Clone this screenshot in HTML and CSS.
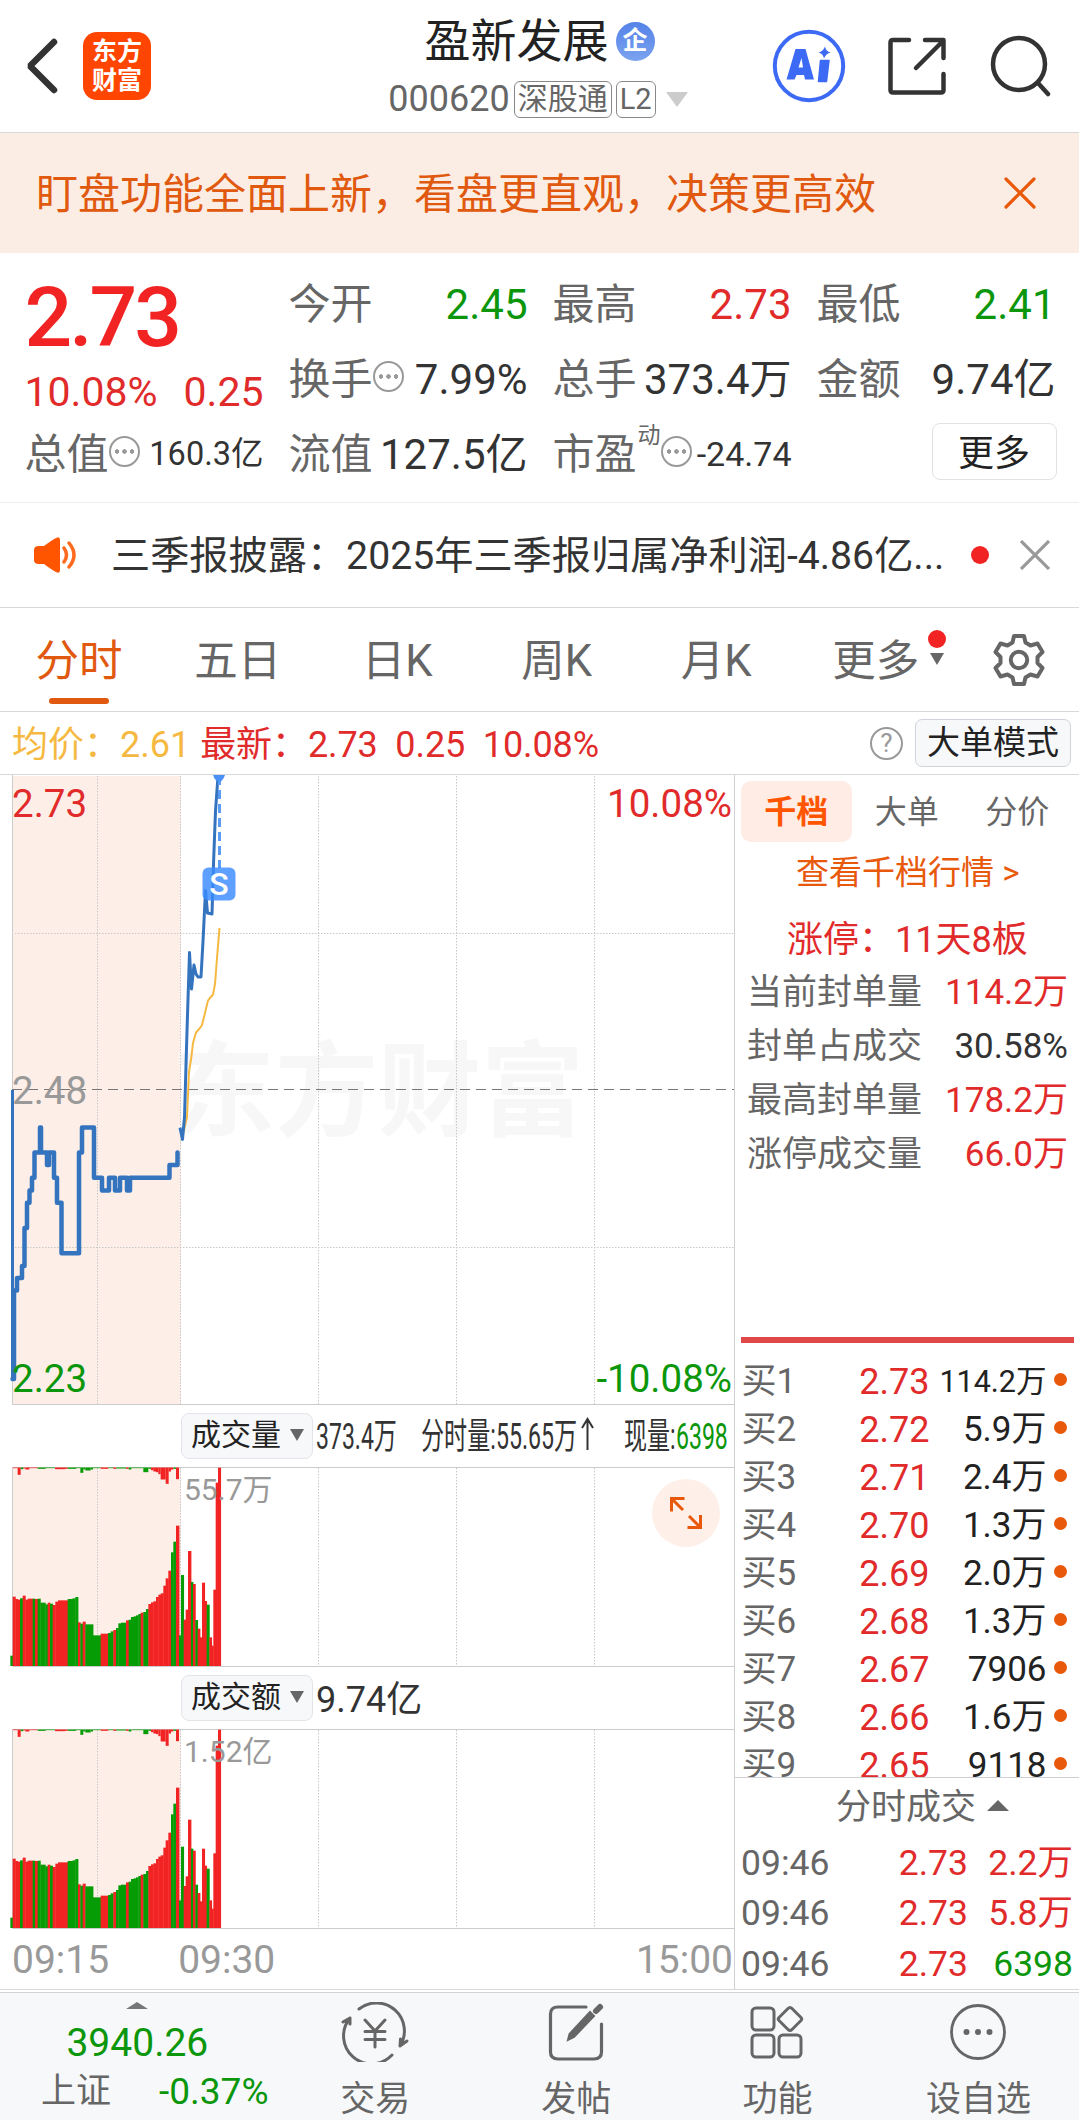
FILE: index.html
```html
<!DOCTYPE html>
<html lang="zh-CN">
<head>
    <meta charset="UTF-8">
    <meta name="viewport" content="width=device-width, initial-scale=1.0">
    <title>盈新发展 000620</title>
    <link rel="stylesheet" href="styles.css">
</head>
<body>
    <!-- 顶部导航 -->
    <header class="header">
        <div class="header-left">
            <svg class="back" width="34" height="56" viewBox="0 0 34 56" fill="none"><path d="M29 4 5 28l24 24" stroke="#333" stroke-width="6.5" stroke-linecap="round" stroke-linejoin="bevel"/></svg>
            <div class="logo"><span>东方</span><span>财富</span></div>
        </div>
        <div class="header-title">
            <div class="name">盈新发展<span class="corp">企</span></div>
            <div class="code">000620<span class="tag">深股通</span><span class="tag tag-l2">L2</span><i class="arrow-down"></i></div>
        </div>
        <div class="header-icons">
            <svg width="74" height="74" viewBox="0 0 74 74" fill="none">
                <circle cx="37" cy="37" r="34.2" stroke="#3d6af5" stroke-width="4"/>
                <path d="M23.500 20H33.500L42 50.500H33L32 46H24.500L22.500 50.500H14.500ZM29.500 29 26.500 38.500H31Z" fill="#3d6af5" fill-rule="evenodd"/>
                <path d="M48.500 31.500H57L54.500 52.500H46.500Z" stroke="#3d6af5" stroke-width="1.500" fill="#3d6af5" stroke-linejoin="round"/>
                <path d="M53 17.500Q54 22.500 58.500 23.500 54 24.500 52 29.500 51 24.500 46.500 23.500 51 22.500 53 17.500Z" fill="#3d6af5"/>
            </svg>
            <svg width="60" height="60" viewBox="0 0 60 60" fill="none" stroke="#333" stroke-width="4.500" stroke-linecap="round" stroke-linejoin="round"><path d="M22 4H6Q3.500 4 3.500 6.500V54Q3.500 56.500 6 56.500H54Q56.500 56.500 56.500 54V38M38 4H56.500V22M56 5 29 32"/></svg>
            <svg class="search" width="62" height="62" viewBox="0 0 62 62" fill="none" stroke="#333" stroke-width="4.500" stroke-linecap="round"><circle cx="29" cy="29" r="26"/><path d="M48 48 58 59"/></svg>
        </div>
    </header>

    <!-- 提示条 -->
    <div class="banner">
        <span>盯盘功能全面上新，看盘更直观，决策更高效</span>
        <svg width="34" height="34" viewBox="0 0 34 34" stroke="#e8590c" stroke-width="3.200" stroke-linecap="round"><path d="M3 3 31 31M31 3 3 31"/></svg>
    </div>

    <!-- 行情数据 -->
    <section class="quote">
        <div class="price-block">
            <div class="price">2.73</div>
            <div class="change"><span>10.08%</span><span>0.25</span></div>
        </div>
        <div class="cell"><label>今开</label><b class="green">2.45</b></div>
        <div class="cell"><label>最高</label><b class="red">2.73</b></div>
        <div class="cell"><label>最低</label><b class="green">2.41</b></div>
        <div class="cell"><label>换手<i class="dots"></i></label><b>7.99%</b></div>
        <div class="cell"><label>总手</label><b>373.4万</b></div>
        <div class="cell"><label>金额</label><b>9.74亿</b></div>
        <div class="cell"><label>总值<i class="dots"></i></label><b class="smaller">160.3亿</b></div>
        <div class="cell"><label>流值</label><b>127.5亿</b></div>
        <div class="cell"><label>市盈<sup>动</sup><i class="dots"></i></label><b class="small">-24.74</b></div>
        <div class="cell cell-more"><button class="more-btn">更多</button></div>
    </section>

    <!-- 公告 -->
    <div class="news">
        <svg width="46" height="38" viewBox="0 0 46 38" fill="none"><path d="M2 14Q2 10 7 10H12Q20 4 24 2 28 0 28 4V34Q28 38 24 36 20 34 12 28H7Q2 28 2 24Z" fill="#ff5500"/><path d="M32 12Q37 19 32 26M37 7Q47 19 37 31" stroke="#ff6a1f" stroke-width="3.500" stroke-linecap="round"/></svg>
        <span class="news-text">三季报披露：2025年三季报归属净利润-4.86亿...</span>
        <i class="news-dot"></i>
        <svg width="30" height="30" viewBox="0 0 30 30" stroke="#999" stroke-width="3.200"><path d="M1 1 29 29M29 1 1 29"/></svg>
    </div>

    <!-- 周期切换 -->
    <nav class="tabs">
        <span class="tab active">分时</span>
        <span class="tab">五日</span>
        <span class="tab">日K</span>
        <span class="tab">周K</span>
        <span class="tab">月K</span>
        <span class="tab tab-more">更多<i></i></span>
        <svg class="gear" width="54" height="54" viewBox="0 0 54 54" fill="none" stroke="#666" stroke-width="4" stroke-linejoin="round"><path d="M22 3H32L33.500 9.500 38.500 12.500 45.500 10.500 50.500 19 45.500 24V30L50.500 35 45.500 43.500 38.500 41.500 33.500 44.500 32 51H22L20.500 44.500 15.500 41.500 8.500 43.500 3.500 35 8.500 30V24L3.500 19 8.500 10.500 15.500 12.500 20.500 9.500Z"/><circle cx="27" cy="27" r="8.200"/></svg>
    </nav>

    <div class="info">
        <span class="avg">均价：2.61</span>
        <span class="latest">最新：2.73&nbsp; 0.25&nbsp; 10.08%</span>
        <span class="help">?</span>
        <button class="mode-btn">大单模式</button>
    </div>

    <main class="main">
        <div class="charts">
            <!-- 分时图 -->
            <svg class="price-chart" width="734" height="630" viewBox="0 0 734 630">
                <rect x="13" y="1" width="168" height="629" fill="#fdeee8"/>
                <text class="watermark" x="172" y="353" textLength="412">东方财富</text>
                <path class="grid" d="M97.500 1V629M180.500 1V629M318.500 1V629M456.500 1V629M594.500 1V629M15 158.500H734M15 472.500H734"/>
                <path d="M12.500 0V629.500H734" stroke="#ccc" fill="none"/>
                <path d="M12 314.500H734" stroke="#777" stroke-dasharray="10 6"/>
                <text class="lv" x="12" y="329" fill="#999">2.48</text>
                <path class="line" stroke-width="3" d="M12.500 315V604"/>
                <path class="line" stroke-width="4.500" stroke-linecap="round" d="M12.500 604H14V515.400H17V503H22V491H24.500V453H27V427.700H29.500V415.400H32V402.800H34.500V377.400H40V352.600H41V377.400H47V390H49V377.400H54V402.800H57V427.700H61.500V478.300H79V377.400H82V352.600H94V402.800H102V415.400H109V402.800H115V415.400H120V402.800H127V415.400H130V402.800H169.500V390H177.500V377.400"/>
                <path d="M182 364 187 342 189 297 191.500 281 193 268 196 257.500 200 253 202 250 204 242 208 225.600 210 223 213 219.500 215 209 217 183 219.500 153" fill="none" stroke="#f5b942" stroke-width="2"/>
                <path class="line" stroke-width="3" d="M180 352.600 182.500 364.400 184.500 342 187 256 189.500 177.500 191.500 214 194 190 196 199 198 202H201L203 166.400 205.500 115.400 207.500 138 212 139 213.500 89 215.500 36 218 1"/>
                <path d="M219.500 1V93" stroke="#5b9cf6" stroke-width="3" stroke-dasharray="9 5"/>
                <path d="M213 0H225Q223 6 219 7 215 6 213 0Z" fill="#4a90f5"/>
                <rect x="202.500" y="92.500" width="33" height="33" rx="6" fill="#3b8bff" fill-opacity=".82"/>
                <text x="219" y="120" text-anchor="middle" font-size="32" font-weight="500" fill="#fff">S</text>
                <text class="lv" x="12" y="42" fill="#e12b2b">2.73</text>
                <text class="lv" x="12" y="617" fill="#0b960b">2.23</text>
                <text class="lv" x="732" y="42" text-anchor="end" fill="#e12b2b">10.08%</text>
                <text class="lv" x="732" y="617" text-anchor="end" fill="#0b960b">-10.08%</text>
            </svg>

            <!-- 成交量 -->
            <div class="ind-head">
                <button class="ind-btn">成交量<i></i></button>
                <svg width="421" height="46" viewBox="0 0 421 46" fill="#333">
                    <text transform="translate(3 36) scale(.64 1)">373.4万</text>
                    <text transform="translate(108 36) scale(.642 1)">分时量:55.65万</text>
                    <path d="M274.500 37V6M269 15 274.500 6 280 15" stroke="#333" stroke-width="2" fill="none"/>
                    <text transform="translate(311 36) scale(.64 1)">现量:</text>
                    <text transform="translate(363 36) scale(.64 1)" fill="#0b960b">6398</text>
                </svg>
            </div>
            <div class="bar-chart">
                <svg id="volChart" width="734" height="200" viewBox="0 0 734 200"></svg>
                <span class="bar-max">55.7万</span>
                <span class="expand">
                    <svg width="34" height="34" viewBox="0 0 34 34" fill="none" stroke="#e8590c" stroke-width="3"><path d="M15.500 2.500H2.500V15.500M3 3 14 14M31.500 19V31.500H18.500M31 31 20 20"/></svg>
                </span>
            </div>

            <!-- 成交额 -->
            <div class="ind-head">
                <button class="ind-btn">成交额<i></i></button>
                <span class="ind-val">9.74亿</span>
            </div>
            <div class="bar-chart">
                <svg id="amtChart" width="734" height="200" viewBox="0 0 734 200"></svg>
                <span class="bar-max">1.52亿</span>
            </div>
            <div class="axis"><span>09:15</span><span class="axis-open">09:30</span><span>15:00</span></div>
        </div>

        <!-- 盘口 -->
        <aside class="side">
            <div class="side-tabs"><span class="on">千档</span><span>大单</span><span>分价</span></div>
            <div class="side-link">查看千档行情 &gt;</div>
            <div class="limit-title">涨停：11天8板</div>
            <div class="limit-row"><span>当前封单量</span><b class="red">114.2万</b></div>
            <div class="limit-row"><span>封单占成交</span><b>30.58%</b></div>
            <div class="limit-row"><span>最高封单量</span><b class="red">178.2万</b></div>
            <div class="limit-row"><span>涨停成交量</span><b class="red">66.0万</b></div>
            <div class="split"></div>
            <div class="book">
                <div class="book-row"><span>买1</span><em>2.73</em><b class="long">114.2万</b><i></i></div>
                <div class="book-row"><span>买2</span><em>2.72</em><b>5.9万</b><i></i></div>
                <div class="book-row"><span>买3</span><em>2.71</em><b>2.4万</b><i></i></div>
                <div class="book-row"><span>买4</span><em>2.70</em><b>1.3万</b><i></i></div>
                <div class="book-row"><span>买5</span><em>2.69</em><b>2.0万</b><i></i></div>
                <div class="book-row"><span>买6</span><em>2.68</em><b>1.3万</b><i></i></div>
                <div class="book-row"><span>买7</span><em>2.67</em><b>7906</b><i></i></div>
                <div class="book-row"><span>买8</span><em>2.66</em><b>1.6万</b><i></i></div>
                <div class="book-row"><span>买9</span><em>2.65</em><b>9118</b><i></i></div>
            </div>
            <div class="deal-title">分时成交<i></i></div>
            <div class="deal-row"><span>09:46</span><em>2.73</em><b class="red">2.2万</b></div>
            <div class="deal-row"><span>09:46</span><em>2.73</em><b class="red">5.8万</b></div>
            <div class="deal-row"><span>09:46</span><em>2.73</em><b class="green">6398</b></div>
        </aside>
    </main>

    <!-- 底部栏 -->
    <footer class="footer">
        <div class="index">
            <i class="arrow-up"></i>
            <div class="index-val">3940.26</div>
            <div class="index-sub"><span>上证</span><span class="green">-0.37%</span></div>
        </div>
        <div class="foot-item">
            <svg width="68" height="60" viewBox="0 0 68 60" fill="none" stroke="#666" stroke-width="3" stroke-linecap="round" stroke-linejoin="round"><path d="M18 7A28 28 0 0 1 59 44L66 39M59 44 59.500 37M51 53A28 28 0 0 1 9 16L2 20M9 16 9 22"/><path d="M24 18 34 29 44 18M34 29V45M24 29.500H44M24 37.500H44"/></svg>
            <span>交易</span>
        </div>
        <div class="foot-item">
            <svg width="60" height="60" viewBox="0 0 60 60" fill="none" stroke="#666" stroke-width="3.200" stroke-linecap="round"><path d="M40 5H12Q4.500 5 4.500 12V50Q4.500 57 12 57H48Q55.500 57 55.500 50V22"/><path d="M22 38 23.500 32 44 10 48 14 28 35Z" fill="#666" stroke-width="2"/><path d="M50 9 54 5" stroke-width="6"/></svg>
            <span>发帖</span>
        </div>
        <div class="foot-item">
            <svg width="60" height="60" viewBox="0 0 60 60" fill="none" stroke="#666" stroke-width="3" stroke-linejoin="round"><rect x="5" y="6" width="22" height="22" rx="4"/><rect x="5" y="33" width="22" height="22" rx="4"/><rect x="32" y="33" width="22" height="22" rx="4"/><path d="M41 6.500Q43 4.500 45 6.500L54 15.500Q55.500 17 54 18.500L45 27.500Q43 29.500 41 27.500L32 18.500Q30.500 17 32 15.500Z"/></svg>
            <span>功能</span>
        </div>
        <div class="foot-item">
            <svg width="60" height="60" viewBox="0 0 60 60" fill="#666"><circle cx="30" cy="30" r="26.500" fill="none" stroke="#666" stroke-width="2.800"/><circle cx="18.500" cy="30" r="3"/><circle cx="30" cy="30" r="3"/><circle cx="41.500" cy="30" r="3"/></svg>
            <span>设自选</span>
        </div>
    </footer>

    <script>
        // 集合竞价柱：[右边界, 高度, 颜色]，单位为 1/3 像素
        const auction = [
            [38,31,'g'],[46,208,'r'],[53,201,'r'],[60,199,'r'],[68,203,'g'],[76,211,'r'],[83,199,'r'],[98,202,'r'],
            [105,202,'g'],[113,201,'r'],[121,202,'g'],[136,190,'g'],[143,185,'g'],[150,190,'r'],[158,187,'g'],
            [166,183,'r'],[174,193,'r'],[203,197,'r'],[218,201,'g'],[226,203,'g'],[234,207,'g'],[241,131,'r'],
            [248,127,'g'],[256,133,'r'],[279,125,'g'],[302,92,'g'],[324,97,'r'],[332,99,'g'],[340,104,'g'],
            [348,108,'r'],[355,114,'g'],[363,128,'g'],[378,130,'g'],[386,137,'r'],[393,139,'g'],[401,147,'g'],
            [408,149,'g'],[415,152,'g'],[422,156,'g'],[430,160,'r'],[438,162,'g'],[445,171,'g'],[453,186,'r'],
            [460,191,'r'],[468,194,'r'],[475,207,'r'],[482,214,'r'],[490,218,'r'],[497,241,'r'],[505,263,'r'],
            [513,286,'r'],[520,341,'g'],[528,373,'g'],[537,421,'r']
        ];
        // 未匹配量，从上往下画
        const unmatched = [
            [53,2,'r'],[62,22,'r'],[70,5,'g'],[76,3,'r'],[88,6,'r'],[113,2,'r'],[137,4,'g'],[165,2,'g'],
            [195,5,'r'],[203,4,'r'],[229,4,'g'],[241,2,'g'],[250,16,'g'],[256,6,'g'],[272,9,'g'],[279,6,'g'],[302,2,'g'],
            [325,4,'r'],[340,2,'g'],[348,4,'r'],[378,3,'g'],[386,4,'r'],[394,6,'g'],[430,2,'g'],[445,14,'g'],
            [453,4,'g'],[460,8,'r'],[468,12,'r'],[475,14,'r'],[482,20,'r'],[497,36,'r'],[506,49,'r'],
            [513,12,'r'],[520,6,'r'],[528,4,'g'],[537,35,'r']
        ];
        const minuteX = [543,551,557,564,573,579,586,593,600,606,614,620,628,635,640,647,654,662];
        const minuteColor = 'ggrrrgrgrrrrgrrrrr';
        const volume = [92,273,139,169,345,252,246,138,112,86,250,195,184,86,61,229,550,595];
        const amount = [83,244,126,155,325,238,232,130,105,80,238,187,178,83,58,224,547,595];
        const colors = { r: '#f22323', g: '#069c06' };

        function drawBars(id, minutes) {
            const bottom = 199;
            let html = '<rect x="13" y="1" width="168" height="198" fill="#fdeee8"/>';
            html += '<path class="grid" d="M97.5 1V199M180.5 1V199M318.5 1V199M456.5 1V199M594.5 1V199"/>';
            html += '<path d="M734 0.500H12.500V199.500H734" stroke="#ccc" fill="none"/>';

            let left = 31;
            const bars = auction.concat(minutes.map((h, i) => [minuteX[i], h, minuteColor[i]]));
            // 同色相邻柱略微重叠，避免出现缝隙
            bars.forEach(([right, h, c]) => {
                html += `<rect x="${left / 3}" y="${bottom - h / 3}" width="${(right - left) / 3 + 0.4}" height="${h / 3}" fill="${colors[c]}"/>`;
                left = right;
            });

            left = 38;
            unmatched.forEach(([right, h, c]) => {
                html += `<rect x="${left / 3}" y="0.5" width="${(right - left) / 3}" height="${h / 3}" fill="${colors[c]}"/>`;
                left = right;
            });
            document.getElementById(id).innerHTML = html;
        }

        drawBars('volChart', volume);
        drawBars('amtChart', amount);
    </script>
</body>
</html>
```
FILE: styles.css
```css
* {
    box-sizing: border-box;
}
body {
    margin: 0;
    width: 1079px;
    height: 2120px;
    overflow: hidden;
    background: #fff;
    color: #333;
    font-family: Roboto, "Noto Sans CJK SC", sans-serif;
}
svg {
    display: block;
    flex-shrink: 0;
}
i, em {
    font-style: normal;
}
b {
    font-weight: 400;
}
button {
    font-family: inherit;
    color: #222;
    padding: 0;
    white-space: nowrap;
}
.red {
    color: #e12b2b;
}
.green {
    color: #0b960b;
}

/* 顶部导航 */
.header {
    display: grid;
    grid-template-columns: 360px 1fr 360px;
    height: 133px;
    border-bottom: 1px solid #d8d8d8;
}
.header-left {
    display: flex;
    align-items: center;
    padding-left: 25px;
    gap: 24px;
}
.logo {
    display: flex;
    flex-direction: column;
    align-items: center;
    justify-content: center;
    width: 68px;
    height: 68px;
    border-radius: 14px;
    background: #ff4500;
    color: #fff;
    font-size: 25px;
    font-weight: 700;
    line-height: 29px;
}
.header-title {
    display: flex;
    flex-direction: column;
    align-items: center;
    padding-top: 13px;
}
.name {
    display: flex;
    align-items: center;
    gap: 7px;
    height: 56px;
    font-size: 46px;
    line-height: 56px;
    color: #222;
}
.corp {
    width: 39px;
    height: 39px;
    border-radius: 50%;
    background: linear-gradient(#5482e8, #7ba3ef);
    color: #fff;
    font-size: 25px;
    font-weight: 700;
    line-height: 38px;
    text-align: center;
}
.code {
    display: flex;
    align-items: center;
    height: 60px;
    margin-left: -3px;
    font-size: 36px;
    color: #666;
}
.tag {
    height: 37px;
    margin-left: 4px;
    padding: 0 3px;
    border: 1.500px solid #888;
    border-radius: 6px;
    font-size: 30px;
    line-height: 34px;
}
.tag-l2 {
    font-size: 29px;
}
.arrow-down {
    margin-left: 10px;
    border: 11px solid transparent;
    border-top: 15px solid #ccc;
    border-bottom: 0;
}
.header-icons {
    display: flex;
    align-items: center;
    gap: 41px;
    padding-left: 53px;
}
.search {
    margin-left: 2px;
}

/* 提示条 */
.banner {
    display: flex;
    align-items: center;
    justify-content: space-between;
    height: 120px;
    padding: 0 42px 0 36px;
    background: #fcede4;
    color: #e0590f;
    font-size: 42px;
}
.banner span {
    margin-top: -6px;
}

/* 行情数据 */
.quote {
    display: grid;
    grid-template-columns: repeat(4, 239px);
    grid-template-rows: repeat(3, 75px);
    column-gap: 25px;
    height: 250px;
    padding: 14px 24px 0 24.500px;
    border-bottom: 1px solid #eee;
}
.price-block {
    grid-row: span 2;
    color: #f22323;
}
.price {
    height: 99px;
    font-size: 84px;
    font-weight: 500;
    line-height: 101px;
    letter-spacing: -3px;
}
.change {
    display: flex;
    justify-content: space-between;
    font-size: 41px;
    line-height: 52px;
    color: #e12b2b;
}
.cell {
    display: flex;
    align-items: center;
    justify-content: space-between;
    font-size: 42px;
    line-height: 75px;
    white-space: nowrap;
}
.cell label {
    display: flex;
    align-items: center;
    color: #666;
}
.cell sup {
    font-size: 23px;
    line-height: 24px;
    margin: -38px 0 0 1px;
}
.cell .small {
    font-size: 34px;
}
.cell .smaller {
    font-size: 32.500px;
}
.dots {
    width: 31px;
    height: 31px;
    margin: -6px 0 0 0;
    border: 2px solid #999;
    border-radius: 50%;
    background: radial-gradient(circle at 6px 50%, #999 2px, transparent 2.500px), radial-gradient(circle at 13.500px 50%, #999 2px, transparent 2.500px), radial-gradient(circle at 21px 50%, #999 2px, transparent 2.500px);
}
.cell-more {
    justify-content: flex-end;
}
.more-btn {
    width: 125px;
    height: 57px;
    margin: -6px -1px 0 0;
    padding-bottom: 3px;
    border: 1.500px solid #e2e2e2;
    border-radius: 8px;
    background: #fff;
    font-size: 36px;
}

/* 公告 */
.news {
    display: flex;
    align-items: center;
    height: 105px;
    padding: 0 29px 0 32px;
    border-bottom: 1px solid #d8d8d8;
}
.news-text {
    flex: 1;
    margin: -6px 0 0 33px;
    font-size: 39.200px;
    white-space: nowrap;
}
.news-dot {
    width: 18px;
    height: 18px;
    margin-right: 31px;
    border-radius: 50%;
    background: #f22323;
}

/* 周期切换 */
.tabs {
    display: flex;
    align-items: center;
    height: 104px;
    border-bottom: 1px solid #d8d8d8;
    font-size: 43.500px;
    color: #666;
}
.tab {
    position: relative;
    width: 159.500px;
    height: 104px;
    line-height: 108px;
    text-align: center;
    white-space: nowrap;
}
.tab:first-child {
    width: 158px;
}
.tab.active {
    color: #e0590f;
}
.tab.active::after {
    content: "";
    position: absolute;
    left: 50%;
    bottom: 8px;
    width: 60px;
    height: 6px;
    margin-left: -30px;
    border-radius: 3px;
    background: #e0590f;
}
.tab-more i {
    position: absolute;
    right: 12px;
    top: 45px;
    border: 7.500px solid transparent;
    border-top: 12px solid #666;
    border-bottom: 0;
}
.tab-more::before {
    content: "";
    position: absolute;
    right: 10px;
    top: 22px;
    width: 18px;
    height: 18px;
    border-radius: 50%;
    background: #f22323;
}
.gear {
    margin-left: 36px;
}

.info {
    display: flex;
    align-items: center;
    height: 63px;
    padding: 0 8px 0 12px;
    border-bottom: 1px solid #d8d8d8;
    font-size: 36px;
    white-space: nowrap;
}
.avg {
    margin-top: -5px;
    color: #f5b942;
}
.latest {
    flex: 1;
    margin: -5px 0 0 10px;
    color: #e12b2b;
    letter-spacing: -0.100px;
}
.help {
    width: 33px;
    height: 33px;
    margin-right: 12px;
    border: 2.500px solid #999;
    border-radius: 50%;
    color: #999;
    font-size: 26px;
    line-height: 29px;
    text-align: center;
}
.mode-btn {
    width: 156px;
    height: 48px;
    border: 1px solid #d0d4da;
    border-radius: 7px;
    background: #f7f8fa;
    font-size: 33px;
    line-height: 46px;
}

/* 图表 */
.main {
    display: flex;
    height: 1215px;
    border-bottom: 1px solid #d8d8d8;
}
.charts {
    width: 735px;
    border-right: 1px solid #d0d0d4;
}
.grid {
    stroke: #c8c8c8;
    stroke-dasharray: 1.500 1.500;
    fill: none;
}
.watermark {
    font-size: 103px;
    font-weight: 700;
    fill: #f7f7f7;
}
.lv {
    font-size: 38.500px;
}
.line {
    stroke: #3474be;
    stroke-linejoin: round;
    fill: none;
}
.ind-head {
    display: flex;
    align-items: center;
    height: 62px;
    padding-left: 181px;
    font-size: 36px;
}
.ind-btn {
    display: flex;
    align-items: center;
    justify-content: space-between;
    width: 132px;
    height: 46px;
    padding: 0 8px 2px 9px;
    border: 1px solid #e2e4e8;
    border-radius: 8px;
    background: #f7f8fa;
    font-size: 30px;
    line-height: 40px;
}
.ind-btn i {
    border: 7.500px solid transparent;
    border-top: 12px solid #666;
    border-bottom: 0;
}
.ind-val {
    margin: -5px 0 0 3px;
}
.bar-chart {
    position: relative;
    height: 200px;
}
.bar-max {
    position: absolute;
    left: 184px;
    top: 4px;
    font-size: 30px;
    line-height: 38px;
    color: #999;
}
.expand {
    position: absolute;
    left: 652px;
    top: 12px;
    display: flex;
    align-items: center;
    justify-content: center;
    width: 68px;
    height: 68px;
    border-radius: 50%;
    background: #fef0e9;
}
.axis {
    display: flex;
    padding: 0 1px 0 12px;
    font-size: 39px;
    line-height: 62px;
    color: #999;
}
.axis-open {
    flex: 1;
    margin-left: 69px;
}

/* 盘口 */
.side {
    display: flex;
    flex-direction: column;
    width: 344px;
    white-space: nowrap;
}
.side-tabs {
    display: flex;
    padding: 6px 0 0 6px;
    font-size: 32px;
    color: #666;
}
.side-tabs span {
    width: 110.500px;
    height: 61px;
    line-height: 62px;
    text-align: center;
}
.side-tabs .on {
    border-radius: 10px;
    background: #feece5;
    color: #ff5500;
    font-weight: 700;
}
.side-link {
    height: 62px;
    padding-left: 61px;
    font-size: 33px;
    line-height: 62px;
    color: #e8590c;
}
.limit-title {
    height: 62px;
    padding: 6px 0 0 52px;
    font-size: 36px;
    line-height: 60px;
    color: #e12b2b;
}
.limit-row {
    display: flex;
    justify-content: space-between;
    padding: 0 11px 0 12px;
    font-size: 35px;
    line-height: 54px;
}
.limit-row span {
    color: #666;
}
.split {
    height: 6px;
    margin: 155px 5px 15px 6px;
    flex-shrink: 0;
    background: #e04848;
}
.book {
    height: 422px;
    overflow: hidden;
    border-bottom: 1px solid #d0d0d4;
}
.book-row {
    display: grid;
    grid-template-columns: 70px 118px 117px 13px;
    align-items: center;
    padding-left: 6.500px;
    height: 48px;
    font-size: 35px;
    line-height: 48px;
}
.book-row span {
    color: #666;
}
.book-row em {
    text-align: right;
    color: #e12b2b;
    font-size: 36px;
}
.book-row b {
    text-align: right;
    color: #222;
}
.book-row .long {
    font-size: 30.500px;
}
.book-row i {
    width: 13px;
    height: 13px;
    margin: -5px 0 0 7px;
    border-radius: 50%;
    background: #e8590c;
}
.deal-title {
    display: flex;
    align-items: center;
    height: 60px;
    padding-left: 101px;
    font-size: 35px;
    line-height: 60px;
    color: #666;
}
.deal-title i {
    margin: -5px 0 0 11px;
    border: 11px solid transparent;
    border-bottom: 11px solid #666;
    border-top: 0;
}
.deal-row {
    display: grid;
    grid-template-columns: 100px 127px 105px;
    padding-left: 6px;
    height: 50.500px;
    font-size: 35.500px;
    line-height: 51px;
}
.deal-row span {
    color: #666;
}
.deal-row em {
    text-align: right;
    color: #e12b2b;
}
.deal-row b {
    text-align: right;
}

/* 底部栏 */
.footer {
    display: flex;
    height: 128px;
    margin-top: 2px;
    border-top: 1px solid #d0d3d8;
    background: #f7f8fa;
    font-size: 35px;
    color: #666;
}
.index {
    width: 275px;
    display: flex;
    flex-direction: column;
    align-items: center;
    padding-top: 9px;
}
.arrow-up {
    border: 11px solid transparent;
    border-bottom: 7px solid #777;
    border-top: 0;
}
.index-val {
    margin-top: 11px;
    font-size: 39px;
    line-height: 46px;
    color: #0b960b;
}
.index-sub {
    display: flex;
    gap: 48px;
    line-height: 52px;
    margin-left: 35px;
    align-self: flex-start;
    padding-left: 6px;
}
.index-sub .green {
    font-size: 37px;
}
.foot-item {
    width: 201.300px;
    display: flex;
    flex-direction: column;
    align-items: center;
    padding-top: 9px;
    line-height: 50px;
}
.foot-item span {
    margin-top: 13px;
}
```
